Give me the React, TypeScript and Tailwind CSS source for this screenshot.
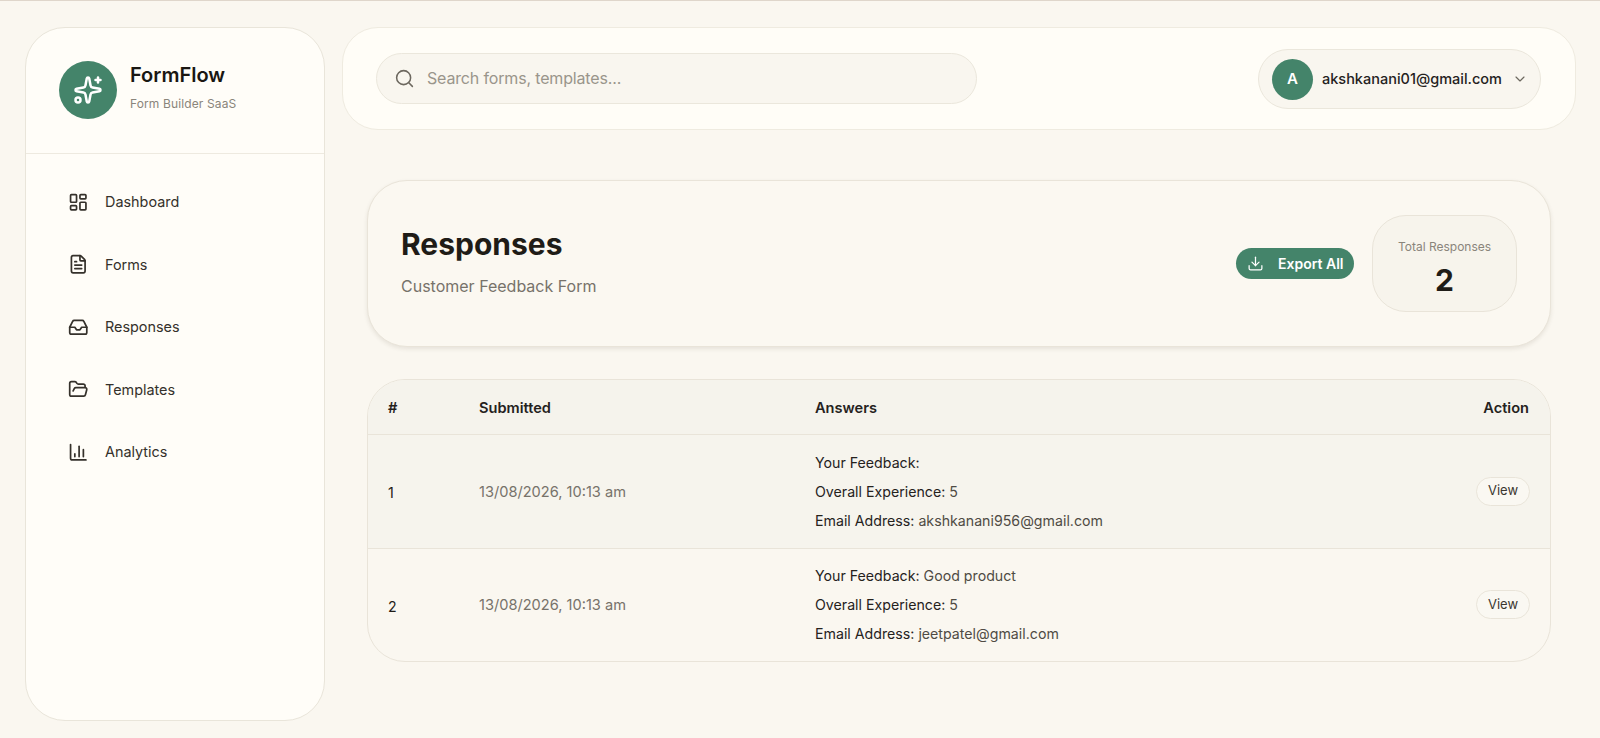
import {
  ChartColumn,
  ChevronDown,
  Download,
  FileText,
  FolderOpen,
  Inbox,
  LayoutDashboard,
  Search,
  Sparkles,
} from "lucide-react";

const navItems = [
  { label: "Dashboard", icon: LayoutDashboard },
  { label: "Forms", icon: FileText },
  { label: "Responses", icon: Inbox },
  { label: "Templates", icon: FolderOpen },
  { label: "Analytics", icon: ChartColumn },
];

const rows = [
  {
    id: 1,
    date: "13/08/2026, 10:13 am",
    feedback: "",
    email: "akshkanani956@gmail.com",
    rowClass: "h-[114px] bg-[#f6f4ed] border-b border-[#e9e4d9]",
  },
  {
    id: 2,
    date: "13/08/2026, 10:13 am",
    feedback: "Good product",
    email: "jeetpatel@gmail.com",
    rowClass: "h-[113px]",
  },
];

function Answer({ label, value }: { label: string; value: string }) {
  return (
    <p className="h-[29px] leading-[29px] text-[#25221d]">
      {label}: <span className="text-[#4f4b44]">{value}</span>
    </p>
  );
}

export default function App() {
  return (
    <div className="min-h-[738px] bg-[#faf7f0] border-t border-[#dfd6cb] font-['Inter',sans-serif] text-[#1f1c17] flex items-start pt-[26px] pl-[25px] pr-[24px] gap-[17px]">
      <aside className="w-[300px] h-[694px] shrink-0 bg-[#fffdf8] border border-[#e9e5da] rounded-[40px]">
        <div className="h-[126px] border-b border-[#eeeae0] flex items-start pt-[33px] pl-[33px] gap-[13px]">
          <div className="w-[58px] h-[58px] rounded-full bg-[#44846a] flex items-center justify-center">
            <Sparkles className="w-[30px] h-[30px] text-white" strokeWidth={2} />
          </div>
          <div>
            <p className="text-[20px] leading-[26px] mt-[1px] font-semibold text-[#1a1712]">FormFlow</p>
            <p className="text-[12px] leading-4 mt-[8px] tracking-[0.01em] text-[#8a857b]">Form Builder SaaS</p>
          </div>
        </div>
        <nav className="flex flex-col pt-[28px] pl-[42px] gap-[22.5px]">
          {navItems.map((item) => (
            <a key={item.label} className="h-10 flex items-center gap-[16.5px] text-[14.4px] text-[#35312b]">
              <item.icon className="w-[20.5px] h-[20.5px] shrink-0 text-[#35312b]" strokeWidth={2} />
              {item.label}
            </a>
          ))}
        </nav>
      </aside>

      <main className="flex-1 min-w-0">
        <header className="h-[103px] bg-[#fffdf7] border border-[#efebe0] rounded-[36px] flex items-center justify-between pl-[33px] pr-[34px]">
          <div className="w-[601px] h-[51px] -mt-[1px] rounded-full bg-[#f9f6ef] border border-[#ebe7dc] flex items-center pl-[17px] gap-[12px]">
            <Search className="w-[21px] h-[21px] text-[#6d685f]" strokeWidth={1.75} />
            <span className="text-[16px] tracking-[-0.01em] text-[#9a958b]">Search forms, templates...</span>
          </div>
          <div className="w-[283px] h-[60px] mt-[1px] rounded-full bg-[#f9f6ef] border border-[#ebe7dc] flex items-center pl-[13px] gap-[9px]">
            <div className="w-[41px] h-[41px] rounded-full bg-[#44846a] flex items-center justify-center text-white text-[15px] font-semibold">
              A
            </div>
            <span className="text-[14.5px] font-medium text-[#25221d]">akshkanani01@gmail.com</span>
            <ChevronDown className="w-4 h-4 ml-[1px] text-[#6d685f]" strokeWidth={1.75} />
          </div>
        </header>

        <div className="ml-[25px] mr-[25px]">
          <section className="mt-[50px] h-[167px] bg-[#fbf8f1] border border-[#e9e4d9] rounded-[40px] shadow-[0_2px_4px_rgba(60,50,30,0.1)] flex items-center pl-[33px] pr-[33px]">
            <div className="flex-1 -mt-[4px]">
              <h1 className="text-[30px] leading-9 font-bold text-[#1f1c17]">Responses</h1>
              <p className="mt-[12px] text-[16px] leading-6 text-[#77726a]">Customer Feedback Form</p>
            </div>
            <button className="w-[118px] h-[31px] mr-[18px] rounded-full bg-[#44846a] text-white text-[14px] font-semibold flex items-center pl-[11px] gap-[14px]">
              <Download className="w-[17px] h-[17px]" strokeWidth={1.75} />
              Export All
            </button>
            <div className="w-[145px] h-[97px] rounded-[34px] bg-[#f7f4ec] border border-[#e9e4d9] flex flex-col items-center pt-[23px]">
              <p className="text-[12px] leading-4 text-[#8a857b]">Total Responses</p>
              <p className="mt-[7px] text-[30px] leading-9 font-bold text-[#1f1c17]">2</p>
            </div>
          </section>

          <section className="mt-[32px] border border-[#e9e4d9] rounded-[38px] overflow-hidden">
            <table className="w-full table-fixed text-[14.2px] text-left">
              <colgroup>
                <col className="w-[91px]" />
                <col className="w-[336px]" />
                <col />
                <col className="w-[120px]" />
              </colgroup>
              <thead className="bg-[#f5f3ec]">
                <tr className="h-[54px] border-b border-[#e9e4d9] text-[14.6px] text-[#25221d]">
                  <th className="pl-[20px] pt-[4px] font-semibold">#</th>
                  <th className="pl-[20px] pt-[4px] font-semibold">Submitted</th>
                  <th className="pl-[20px] pt-[4px] font-semibold">Answers</th>
                  <th className="pr-[21px] pt-[4px] text-right font-semibold">Action</th>
                </tr>
              </thead>
              <tbody>
                {rows.map((row) => (
                  <tr key={row.id} className={row.rowClass}>
                    <td className="pl-[20px] pt-[3px]">{row.id}</td>
                    <td className="pl-[20px] pt-[3px] text-[14.6px] text-[#77726a]">{row.date}</td>
                    <td className="pl-[20px]">
                      <Answer label="Your Feedback" value={row.feedback} />
                      <Answer label="Overall Experience" value="5" />
                      <Answer label="Email Address" value={row.email} />
                    </td>
                    <td className="pr-[20px] text-right">
                      <button className="w-[54px] h-[29px] rounded-full border border-[#e9e4d9] bg-[#faf8f2] text-[13px] text-[#3a362f]">
                        View
                      </button>
                    </td>
                  </tr>
                ))}
              </tbody>
            </table>
          </section>
        </div>
      </main>
    </div>
  );
}
